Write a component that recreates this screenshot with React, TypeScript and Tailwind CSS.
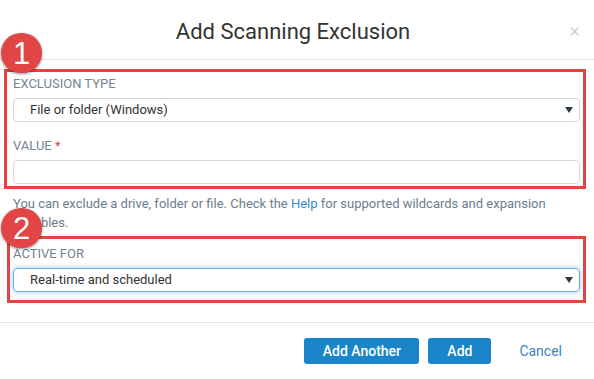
import React from "react";

function Caret() {
  return (
    <svg width="8" height="6" viewBox="0 0 8 6" className="absolute right-[6px] top-1/2 -translate-y-1/2">
      <path d="M0 0 L8 0 L4 6 Z" fill="#2d3a45" />
    </svg>
  );
}

function Badge({ n, className }: { n: string; className: string }) {
  return (
    <div
      className={
        "absolute w-[41px] h-[40px] rounded-full bg-[#e24545] flex items-center justify-center text-white text-[31px] leading-none shadow-[0_1px_3px_rgba(0,0,0,0.45)] " +
        className
      }
      style={{ fontFamily: "Arial, 'Liberation Sans', sans-serif" }}
    >
      {n}
    </div>
  );
}

export default function App() {
  return (
    <div
      className="relative w-[594px] h-[379px] bg-white overflow-hidden"
      style={{ fontFamily: "Roboto, 'Liberation Sans', sans-serif" }}
    >
      {/* Header */}
      <div className="relative h-[60px] border-b border-[#e5e5e5] flex items-center justify-center pt-[3px]">
        <h1 className="text-[22px] text-[#333] pr-[8px]">Add Scanning Exclusion</h1>
        <span className="absolute right-[14px] top-[20px] text-[20px] leading-none text-[#c4c4c4] font-light">×</span>
      </div>

      {/* Body */}
      <div className="flex flex-col pl-[13px] pr-[14px] pt-[16px] pb-[30px] border-b border-[#e5e5e5] text-[13px]">
        <div className="flex flex-col gap-[6px]">
          <label className="leading-[16px] text-[#758392] uppercase">Exclusion Type</label>
          <div className="relative h-[24px] border border-[#d8d8d8] rounded-[4px] flex items-center pl-[16px] text-[#333]">
            File or folder (Windows)
            <Caret />
          </div>
        </div>

        <div className="flex flex-col gap-[6px] mt-[16px]">
          <label className="leading-[16px] text-[#758392] uppercase">
            Value <span className="text-[#e0443f]">*</span>
          </label>
          <div className="h-[24px] border border-[#d8d8d8] rounded-[4px]" />
        </div>

        <p className="mt-[10px] leading-[19px] text-[#6e7d8c]">
          You can exclude a drive, folder or file. Check the <span className="text-[#3b87c6]">Help</span> for supported wildcards and expansion variables.
        </p>

        <div className="flex flex-col gap-[6px] mt-[14px]">
          <label className="leading-[16px] text-[#758392] uppercase">Active For</label>
          <div className="relative h-[24px] border border-[#66afe9] rounded-[4px] flex items-center pl-[16px] text-[#333] shadow-[0_0_6px_rgba(102,175,233,0.6)]">
            Real-time and scheduled
            <Caret />
          </div>
        </div>
      </div>

      {/* Footer */}
      <div className="flex justify-end items-center pt-[15px] pr-[18px] gap-[9px]">
        <button className="h-[26px] w-[115px] rounded-[3px] bg-[#1a85c8] text-white text-[14px] font-medium">Add Another</button>
        <button className="h-[26px] w-[63px] rounded-[3px] bg-[#1a85c8] text-white text-[14px] font-medium">Add</button>
        <button className="ml-[5px] h-[26px] px-[14px] text-[#3d86c6] text-[14px]">Cancel</button>
      </div>

      {/* Annotations */}
      <div className="absolute left-[4px] top-[69px] w-[582px] h-[120px] border-[3px] border-[#e5433f] pointer-events-none" />
      <div className="absolute left-[7px] top-[236px] w-[579px] h-[67px] border-[3px] border-[#e5433f] pointer-events-none" />
      <Badge n="1" className="left-[1px] top-[33px]" />
      <Badge n="2" className="left-[1px] top-[208px]" />
    </div>
  );
}
